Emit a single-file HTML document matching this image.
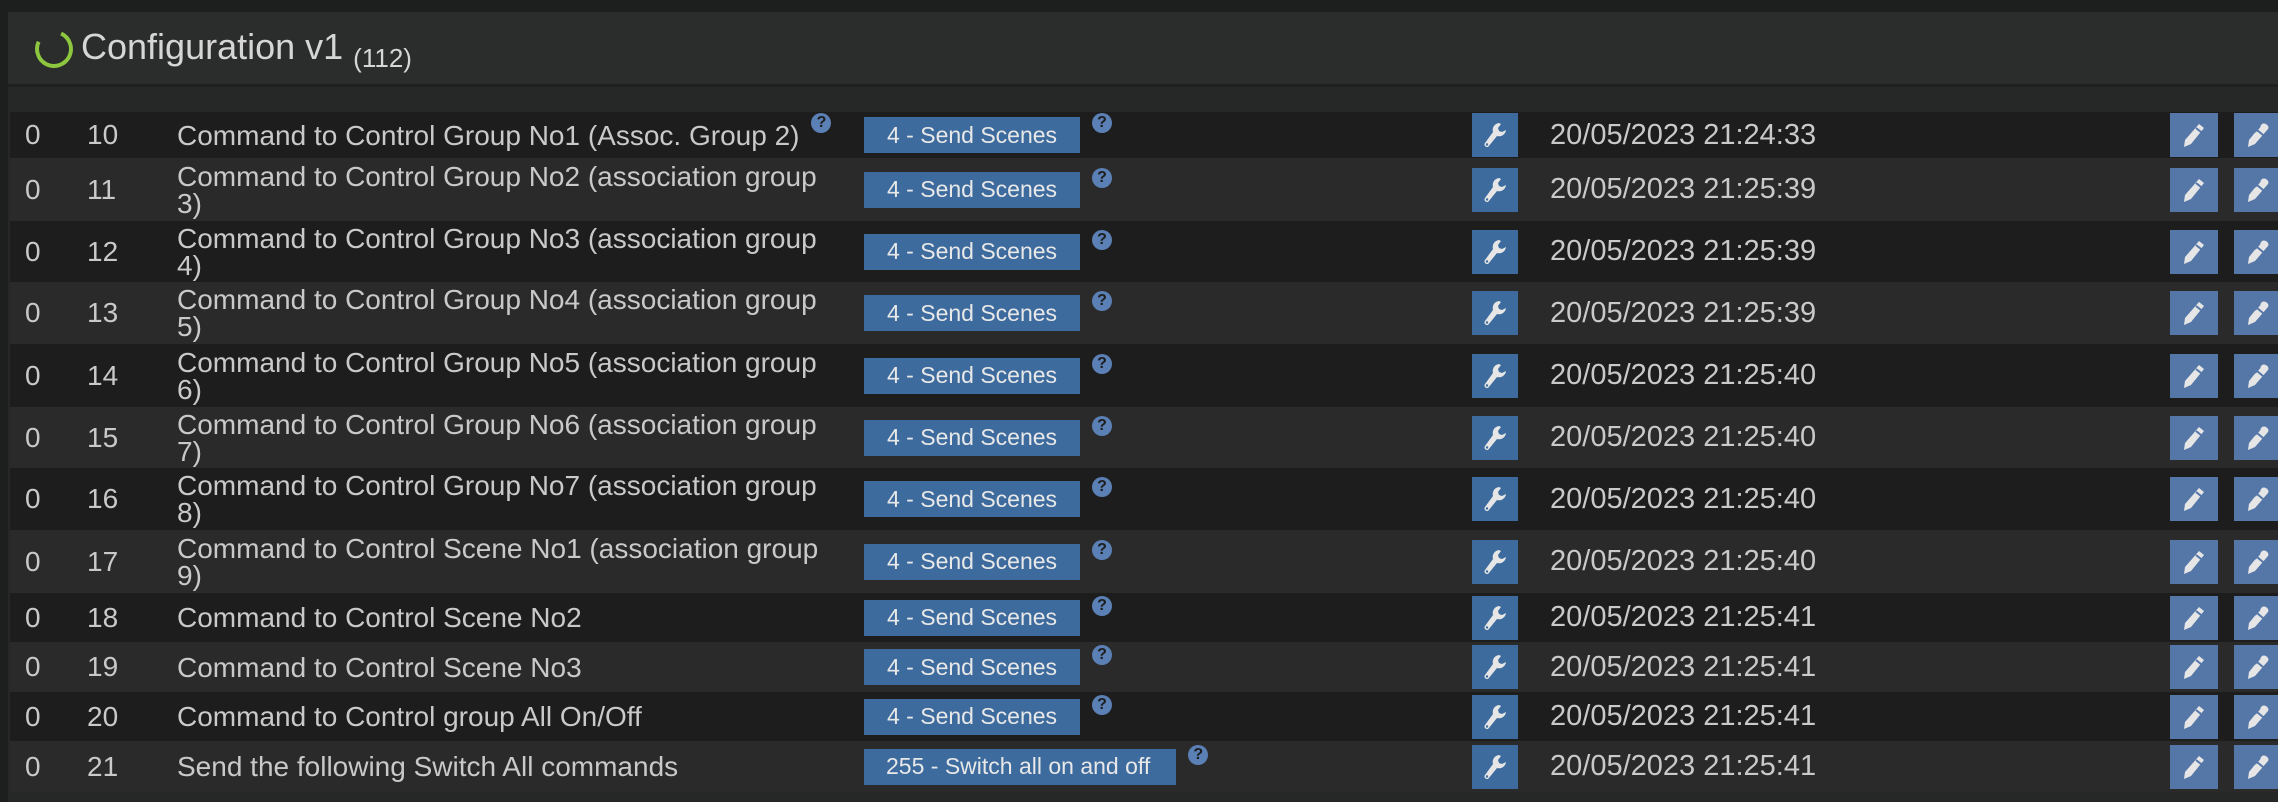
<!DOCTYPE html>
<html><head><meta charset="utf-8"><style>
body{margin:0;width:2278px;height:802px;overflow:hidden;background:#262727;font-family:"Liberation Sans",sans-serif;color:#c9c9c9;position:relative}
.top{position:absolute;left:0;top:0;width:2278px;height:12px;background:#1d1e1e}
.lft{position:absolute;left:0;top:0;width:8px;height:802px;background:#1d1e1e}
.hdr{position:absolute;left:8px;top:12px;width:2270px;height:72px;background:#2b2c2c;border-bottom:3px solid #1f2020}
.ring{position:absolute;left:35px;top:30px;width:30px;height:30px;border:4px solid #8dc63f;border-radius:50%;border-top-color:transparent;transform:rotate(-20deg)}
.title{position:absolute;left:81px;top:26px;font-size:36px;color:#d6d6d6}
.title small{font-size:26px;position:relative;top:8px}
.row{position:absolute;left:10px;width:2268px;}
.row>div{position:absolute;top:0;bottom:0;display:flex;align-items:center;font-size:28px}
.d{background:#1d1d1d}.l{background:#2a2a2a}
.btn{background:#3d6b9e;color:#e8e8e8;font-size:23px;height:36px;padding:0 23px;display:flex;align-items:center}
.btn.w{padding:0 26px 0 22px}
.q{display:inline-block;width:20px;height:20px;border-radius:50%;background:#5b80b5;color:#1d1d1d;font-size:16px;font-weight:bold;text-align:center;line-height:20px;position:relative;top:-12px;margin-left:12px}
.ib{width:46px;height:44px;background:#3d6b9e;display:flex;align-items:center;justify-content:center}
.eb{width:48px;height:44px;background:#5577a8;display:flex;align-items:center;justify-content:center}
.desc{line-height:27px}
.dt{font-size:29px!important}
</style></head><body>
<div class="top"></div><div class="lft"></div>
<div class="hdr"></div>
<div class="ring"></div>
<div class="title">Configuration v1 <small>(112)</small></div>
<div id="rows"></div>
<script>
var data=[
["10","Command to Control Group No1 (Assoc. Group 2)","4 - Send Scenes","20/05/2023 21:24:33",112,46,1],
["11","Command to Control Group No2 (association group<br>3)","4 - Send Scenes","20/05/2023 21:25:39",158,63],
["12","Command to Control Group No3 (association group<br>4)","4 - Send Scenes","20/05/2023 21:25:39",221,61],
["13","Command to Control Group No4 (association group<br>5)","4 - Send Scenes","20/05/2023 21:25:39",282,62],
["14","Command to Control Group No5 (association group<br>6)","4 - Send Scenes","20/05/2023 21:25:40",344,63],
["15","Command to Control Group No6 (association group<br>7)","4 - Send Scenes","20/05/2023 21:25:40",407,61],
["16","Command to Control Group No7 (association group<br>8)","4 - Send Scenes","20/05/2023 21:25:40",468,62],
["17","Command to Control Scene No1 (association group<br>9)","4 - Send Scenes","20/05/2023 21:25:40",530,63],
["18","Command to Control Scene No2","4 - Send Scenes","20/05/2023 21:25:41",593,49],
["19","Command to Control Scene No3","4 - Send Scenes","20/05/2023 21:25:41",642,50],
["20","Command to Control group All On/Off","4 - Send Scenes","20/05/2023 21:25:41",692,49],
["21","Send the following Switch All commands","255 - Switch all on and off","20/05/2023 21:25:41",741,51]];
var wr='<svg width="26" height="28" viewBox="0 0 26 28"><path d="M17 2a7 7 0 0 0-6 9L3 22a2.5 2.5 0 0 0 3.5 3.5L15 15a7 7 0 0 0 9-6l-4 2-3-1-1-3 3-4z" fill="#e6e6e6"/><circle cx="5" cy="23.5" r="1.2" fill="#3d6b9e"/></svg>';
var pe='<svg width="26" height="26" viewBox="0 0 26 26"><path d="M18 2l5 4-13 16-7 3 1-7z" fill="#e6e6e6"/><path d="M15 6l5 4" stroke="#5577a8" stroke-width="2"/></svg>';
var pe2='<svg width="26" height="26" viewBox="0 0 26 26"><path d="M17 2c3-2 8 2 6 5l-13 15-7 3 1-7z" fill="#e6e6e6"/><path d="M12 8l6 5M15 4l-5 6" stroke="#5577a8" stroke-width="2"/></svg>';
var h='';
data.forEach(function(r,i){
h+='<div class="row '+(i%2?'l':'d')+'" style="top:'+r[4]+'px;height:'+r[5]+'px">'+
'<div style="left:15px">0</div><div style="left:77px">'+r[0]+'</div>'+
'<div class="desc" style="left:167px">'+r[1]+(r[6]?'<span class="q">?</span>':'')+'</div>'+
'<div style="left:854px"><span class="btn'+(i==11?' w':'')+'">'+r[2]+'</span><span class="q">?</span></div>'+
'<div style="left:1462px"><span class="ib">'+wr+'</span></div>'+
'<div class="dt" style="left:1540px">'+r[3]+'</div>'+
'<div style="left:2160px"><span class="eb">'+pe+'</span></div>'+
'<div style="left:2224px"><span class="eb">'+pe2+'</span></div></div>';});
document.getElementById('rows').innerHTML=h;
</script>
</body></html>
